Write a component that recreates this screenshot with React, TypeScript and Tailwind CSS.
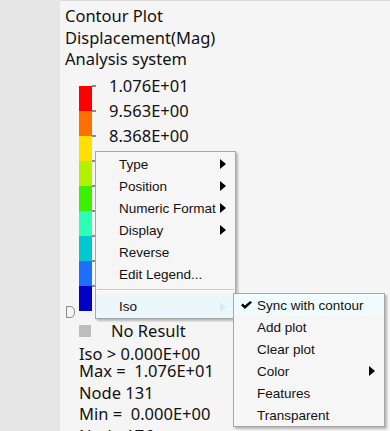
import React from "react";

const bands = ["#ff0000", "#ff7000", "#ffe000", "#b4f000", "#3cf000", "#2effb4", "#00c8d2", "#1e6eff", "#0000c8"];
const labels = ["1.076E+01", "9.563E+00", "8.368E+00"];

const mainItems = [
    { label: "Type", arrow: true },
    { label: "Position", arrow: true },
    { label: "Numeric Format", arrow: true },
    { label: "Display", arrow: true },
    { label: "Reverse", arrow: false },
    { label: "Edit Legend...", arrow: false },
];

const isoItems = [
    { label: "Sync with contour", check: true, arrow: false },
    { label: "Add plot", check: false, arrow: false },
    { label: "Clear plot", check: false, arrow: false },
    { label: "Color", check: false, arrow: true },
    { label: "Features", check: false, arrow: false },
    { label: "Transparent", check: false, arrow: false },
];

function Arrow({ color = "#000" }: { color?: string }) {
    return (
        <svg width="6" height="10" viewBox="0 0 6 10">
            <path d="M0 0 L6 5 L0 10 Z" fill={color} />
        </svg>
    );
}

export default function App() {
    return (
        <section className="relative flex h-[431px] w-[390px] overflow-hidden bg-[#f5f5f5] text-[#111]">
            <div className="w-[60px] shrink-0 bg-[#e6e6e6]" />
            <main className="flex flex-1 flex-col border-t border-[#dcdcdc] pl-[5px] pt-[4px] font-['Noto_Sans',sans-serif] text-[16.5px]">
                <div className="leading-[21.5px]">
                    <p>Contour Plot</p>
                    <p>Displacement(Mag)</p>
                    <p>Analysis system</p>
                </div>

                <div className="relative mt-[16px] flex pl-[14px]">
                    <div className="flex flex-col">
                        {bands.map((c, i) => (
                            <div key={i} className="flex items-start">
                                <div className="h-[25px] w-[13px]" style={{ backgroundColor: c }} />
                                <div className="h-[2px] w-[4px] -translate-y-[1px] bg-[#8a8a8a]" />
                            </div>
                        ))}
                    </div>
                    <div className="-mt-[12.5px] ml-[13px] flex flex-col">
                        {labels.map((l) => (
                            <div key={l} className="h-[25px] leading-[25px]">{l}</div>
                        ))}
                    </div>
                    <svg className="absolute left-[1px] top-[220px]" width="9" height="12" viewBox="0 0 9 12">
                        <path d="M0.5 0.5 H4 Q8.5 0.5 8.5 6 Q8.5 11.5 4 11.5 H0.5 Z" fill="none" stroke="#8a8a8a" strokeWidth="1" />
                    </svg>
                </div>

                <div className="mt-[9px] flex items-center pl-[14px]">
                    <div className="h-[12px] w-[12px] bg-[#bdbdbd]" />
                    <span className="ml-[20px] leading-[22px]">No Result</span>
                </div>

                <div className="mt-[3px] pl-[14px]">
                    <p className="leading-[17px]">Iso &gt; 0.000E+00</p>
                    <p className="leading-[17px]">Max =&nbsp; 1.076E+01</p>
                    <p className="mt-[3px] leading-[21px]">Node 131</p>
                    <p className="leading-[22px]">Min =&nbsp; 0.000E+00</p>
                    <p className="leading-[22px]">Node 176</p>
                </div>
            </main>

            <div className="absolute left-[95px] top-[151px] w-[141px] border border-[#a7a7a7] bg-[#f6f6f6] pt-[1px] font-['Liberation_Sans',Arial,sans-serif] text-[13.5px] shadow-[2px_2px_2px_rgba(0,0,0,0.25)]">
                {mainItems.map((it) => (
                    <div key={it.label} className="flex h-[22px] items-center pl-[23px] pr-[9px]">
                        <span className="flex-1 translate-y-[1px] whitespace-nowrap">{it.label}</span>
                        {it.arrow && <Arrow />}
                    </div>
                ))}
                <div className="mx-[1px] my-[4px] h-[2px] border-t border-[#c8c8c8] bg-white" />
                <div className="flex h-[23px] items-center bg-[#ebf7fa] pl-[23px] pr-[9px]">
                    <span className="flex-1 translate-y-[1px]">Iso</span>
                    <Arrow color="#d4eef6" />
                </div>
            </div>

            <div className="absolute left-[233px] top-[293px] w-[152px] border border-[#a7a7a7] bg-[#f6f6f6] font-['Liberation_Sans',Arial,sans-serif] text-[13.5px] shadow-[2px_2px_2px_rgba(0,0,0,0.25)]">
                {isoItems.map((it, i) => (
                    <div
                        key={it.label}
                        className={
                            "flex h-[22px] items-center pr-[9px] " + (i === 0 ? "bg-[#effbfd]" : "")
                        }
                    >
                        <span className="flex w-[23px] justify-center pl-[2px]">
                            {it.check && (
                                <svg width="11" height="8" viewBox="0 0 11 8">
                                    <path d="M0 4.2 L1.8 2.6 L3.9 4.6 L9.2 0 L11 1.6 L3.9 8 Z" fill="#000" />
                                </svg>
                            )}
                        </span>
                        <span className="flex-1 translate-y-[1px] whitespace-nowrap">{it.label}</span>
                        {it.arrow && <Arrow />}
                    </div>
                ))}
            </div>
        </section>
    );
}
